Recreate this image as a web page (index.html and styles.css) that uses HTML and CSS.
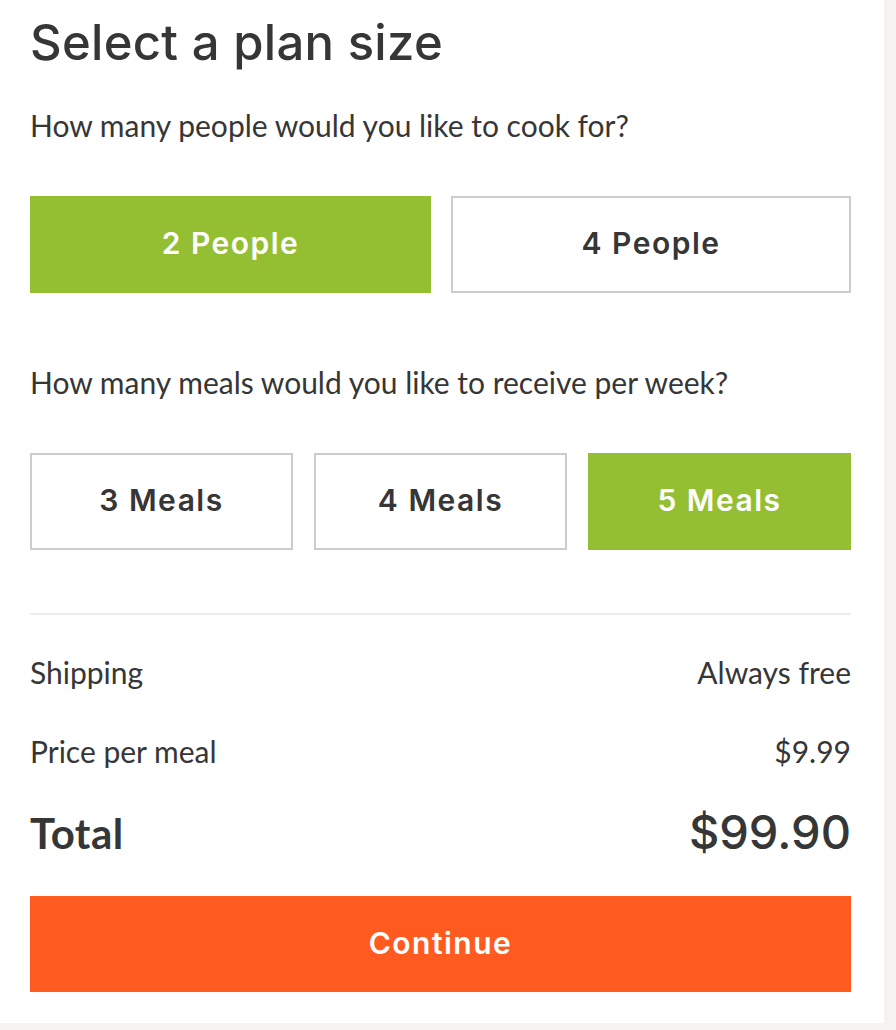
FILE: index.html
```html
<!DOCTYPE html>
<html>
<head>
<meta charset="utf-8">
<link rel="stylesheet" href="styles.css">
</head>
<body>
<div class="panel">
  <h1 class="title">Select a plan size</h1>
  <p class="question q1">How many people would you like to cook for?</p>
  <div class="options two">
    <div class="opt selected">2 People</div>
    <div class="opt">4 People</div>
  </div>
  <p class="question q2">How many meals would you like to receive per week?</p>
  <div class="options three">
    <div class="opt">3 Meals</div>
    <div class="opt">4 Meals</div>
    <div class="opt selected">5 Meals</div>
  </div>
  <hr class="divider">
  <div class="row r-ship"><span>Shipping</span><span>Always free</span></div>
  <div class="row r-price"><span>Price per meal</span><span>$9.99</span></div>
  <div class="row total"><span class="t-label">Total</span><span class="t-value">$99.90</span></div>
  <button class="continue">Continue</button>
</div>
</body>
</html>
```
FILE: styles.css
```css
html, body {
  margin: 0;
  padding: 0;
  background: #f4f3f1;
}
body {
  width: 896px;
  height: 1030px;
  overflow: hidden;
  color: #363636;
}
.panel {
  width: 884px;
  height: 1023px;
  box-sizing: border-box;
  background: #ffffff;
  padding: 0 33px 0 30px;
  display: flex;
  flex-direction: column;
}
.title {
  margin: 14px 0 0;
  font-family: "Inter", sans-serif;
  font-weight: 500;
  font-size: 49px;
  line-height: 58px;
  letter-spacing: 0.3px;
}
.question {
  margin: 0;
  font-family: "Lato", sans-serif;
  font-size: 30px;
  line-height: 36px;
  font-weight: 400;
}
.q1 { margin-top: 35px; }
.q2 { margin-top: 71px; }
.options {
  display: grid;
  height: 97px;
  margin-top: 53px;
}
.options.two {
  grid-template-columns: 401px 1fr;
  gap: 20px;
}
.options.three {
  grid-template-columns: 263px 253px 1fr;
  gap: 21px;
}
.opt {
  box-sizing: border-box;
  border: 2px solid #cccccc;
  padding-bottom: 3px;
  display: flex;
  align-items: center;
  justify-content: center;
  font-family: "Inter", sans-serif;
  font-weight: 600;
  font-size: 30px;
  letter-spacing: 1.5px;
  color: #363636;
  background: #fff;
}
.opt.selected {
  background: #94bf33;
  border-color: #94bf33;
  color: #ffffff;
}
.divider {
  margin: 63px 0 0;
  border: 0;
  height: 2px;
  background: #ececec;
}
.row {
  display: flex;
  justify-content: space-between;
  align-items: baseline;
  font-family: "Lato", sans-serif;
  font-size: 30px;
  line-height: 36px;
}
.r-ship { margin-top: 39px; }
.r-price { margin-top: 43px; }
.total {
  margin-top: 38px;
  line-height: 50px;
}
.t-label {
  font-family: "Lato", sans-serif;
  font-weight: 700;
  font-size: 42px;
  letter-spacing: 0.5px;
}
.t-value {
  font-family: "Inter", sans-serif;
  font-weight: 500;
  font-size: 47px;
}
.continue {
  margin-top: 38px;
  height: 96px;
  border: 0;
  background: #ff5b20;
  color: #ffffff;
  font-family: "Inter", sans-serif;
  font-weight: 600;
  font-size: 30px;
  letter-spacing: 1.5px;
  padding: 0 0 3px;
}
```
